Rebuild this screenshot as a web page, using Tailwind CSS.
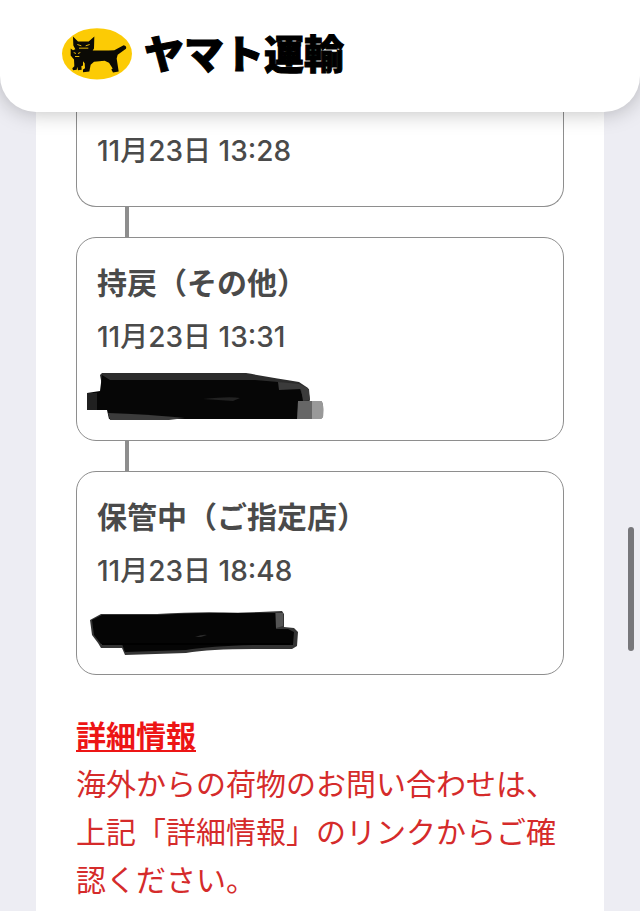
<!DOCTYPE html>
<html lang="ja">
<head>
  <meta charset="UTF-8" />
  <meta name="viewport" content="width=device-width, initial-scale=1.0" />
  <title>ヤマト運輸</title>
  <script src="https://cdn.jsdelivr.net/npm/@tailwindcss/browser@4"></script>
</head>
<body class="bg-[#ededf3] text-[#4a4a4a] font-['Inter','Noto_Sans_CJK_JP',sans-serif]">
  <!-- Header -->
  <header class="relative z-10 flex items-center h-28 px-15 pb-1 bg-white rounded-b-[36px] shadow-[0_0_22px_rgba(0,0,0,0.27)]">
    <a href="#" class="flex items-center gap-3 pl-0.5 text-black">
      <svg class="w-[70px] h-[52px]" viewBox="36 25 210 155" aria-hidden="true">
        <ellipse cx="141" cy="102" rx="105" ry="77" fill="#fccb05" />
        <path d="M69 50 L84 65 H116 L133 50 L132 86 L128 92 H176 L193 91 L221 76 Q231 78 228 87 L203 105 L200 116 L206 155 L189 158 L184 149 L188 146 L177 129 L164 123 L132 126 L122 135 L118 155 L99 157 L99 149 L105 145 L104 130 L99 124 L99 137 L94 139 L95 150 L84 151 L82 141 L80 150 L69 151 L67 145 L73 139 L72 119 L62 107 L62 86 L69 91 L76 88 L70 77 Z" fill="#0b0a05" />
        <path d="M82 74 L94 78 M119 74 L107 78 M87 85 H115 M71 98 L78 101 M91 98 L84 101 M75 110 H88" stroke="#e4b70a" stroke-width="3" fill="none" />
      </svg>
      <span class="pt-0.5 text-[40px] leading-12 font-black [-webkit-text-stroke:1px_black]">ヤマト運輸</span>
    </a>
  </header>

  <main class="mx-9 px-10 pb-2 bg-white">
    <!-- Delivery history -->
    <ol>
      <li class="h-[95px] px-5 pt-[15px] border border-t-0 border-[#8e8e8e] rounded-b-[20px]">
        <time class="block text-[28px] leading-12 font-medium">11月23日 13:28</time>
      </li>
      <li>
        <div class="ml-[49px] w-1 h-[30px] bg-[#8e8e8e]"></div>
        <div class="px-5 pt-[21px] pb-[19px] border border-[#8e8e8e] rounded-[20px]">
          <h2 class="text-[30px] leading-12 font-bold">持戻（その他）</h2>
          <time class="block my-1.5 text-[28px] leading-12 font-medium">11月23日 13:31</time>
          <svg class="-ml-3 w-60 h-[54px]" viewBox="0 0 240 54" aria-hidden="true">
            <path d="M15 8 L17 6 H161 Q190 11 214 15 L223 21 L225 33 L220 42 L25 49 L18 24 Z" fill="#2c2c2c" />
            <path d="M2 26 L15 24 L17 8 L25 13 H170 L193 15 L215 22 L219 33 L213 52 L100 52 L24 52 L22 43 L2 43 Z" fill="#060606" />
            <path d="M2 26 H12 V43 H2 Z" fill="#202020" />
            <path d="M23 46 Q60 47 100 51 L84 53 L25 53 Z" fill="#3b3b3b" />
            <path d="M193 15 L214 17 L224 22 L225 33 L218 34 L216 22 L194 23 Z" fill="#3b3b3b" />
            <path d="M213 34 H236 Q239 35 238 50 L236 52 H212 Z" fill="#666" />
            <path d="M227 34 H236 Q239 35 238 50 L236 52 H227 Z" fill="#999" />
            <path d="M118 32 Q145 29 155 31 L148 34 Z" fill="#222" />
          </svg>
        </div>
      </li>
      <li>
        <div class="ml-[49px] w-1 h-[30px] bg-[#8e8e8e]"></div>
        <div class="px-5 pt-[21px] pb-[19px] border border-[#8e8e8e] rounded-[20px]">
          <h2 class="text-[30px] leading-12 font-bold">保管中（ご指定店）</h2>
          <time class="block my-1.5 text-[28px] leading-12 font-medium">11月23日 18:48</time>
          <svg class="-ml-3 w-60 h-[54px]" viewBox="0 0 240 54" aria-hidden="true">
            <path d="M5 19 L16 13 H72 Q120 10 153 12 L197 10 L199 13 V26 L209 27 L213 31 L212 45 L207 48 H168 Q125 48 101 52 L40 54 L37 47 L16 47 L13 42 L7 34 Z" fill="#343434" />
            <path d="M7 19 L17 14 H72 Q120 11 190 12 L191 28 L203 28 L209 31 L208 44 H168 Q125 45 101 49 L40 51 L37 43 L16 43 L9 34 Z" fill="#050505" />
            <path d="M191 12 L198 12 V25 L191 27 Z" fill="#555" />
            <path d="M17 43 H205" stroke="#000" stroke-width="2" />
            <path d="M110 36 Q118 33 122 34 L116 36 Z" fill="#292929" />
          </svg>
        </div>
      </li>
    </ol>

    <!-- Overseas parcels -->
    <section class="mt-[37px] text-[30px] leading-12 text-[#d52b2b]">
      <a href="#" class="font-bold text-[#ed1515] underline decoration-2 underline-offset-3">詳細情報</a>
      <p>海外からの荷物のお問い合わせは、上記「詳細情報」のリンクからご確認ください。</p>
    </section>
  </main>

  <!-- Scroll indicator -->
  <div class="fixed right-1.5 top-[527px] w-1.5 h-31 rounded-full bg-[#77777b]"></div>
</body>
</html>
